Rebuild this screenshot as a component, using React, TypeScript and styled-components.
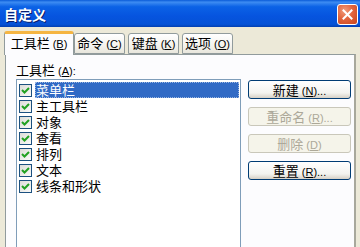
import styled, { createGlobalStyle } from "styled-components";

const GlobalStyle = createGlobalStyle`
  html, body {
    margin: 0;
    padding: 0;
    background: #ece9d8;
    overflow: hidden;
  }
  body {
    font-family: "Liberation Sans", "Noto Sans CJK SC", sans-serif;
    font-size: 12px;
    color: #000;
  }
`;

const toolbars = ["菜单栏", "主工具栏", "对象", "查看", "排列", "文本", "线条和形状"];

const Window = styled.div`
  width: 360px;
  height: 247px;
  overflow: hidden;
  display: flex;
  flex-direction: column;
  background: #ece9d8;
`;

const TitleBar = styled.div`
  height: 27px;
  flex: none;
  display: flex;
  align-items: center;
  justify-content: space-between;
  padding: 0 2px 0 4px;
  background: linear-gradient(
    to bottom,
    #0a5bd8 0%,
    #3d8cf2 8%,
    #0b62e6 25%,
    #0654df 60%,
    #0552d6 90%,
    #033fb0 100%
  );
`;

const Title = styled.span`
  color: #fff;
  font-family: "Noto Sans CJK SC", sans-serif;
  font-weight: 700;
  font-size: 14px;
  text-shadow: 1px 1px 0 #0a1e6b;
`;

const CloseButton = styled.div`
  width: 19px;
  height: 19px;
  margin-top: 1px;
  border: 1px solid #fff;
  border-radius: 3px;
  background: radial-gradient(circle at 35% 30%, #f09c7c 0%, #e2653e 45%, #c7431c 100%);
  display: flex;
  align-items: center;
  justify-content: center;
`;

const Body = styled.div`
  flex: 1;
  padding: 3px 0 0 4px;
  display: flex;
  flex-direction: column;
  min-height: 0;
`;

const TabRow = styled.div`
  display: flex;
  align-items: flex-end;
  height: 24px;
  flex: none;
  position: relative;
  z-index: 1;
`;

const Tab = styled.div<{ $active?: boolean; $w: number }>`
  width: ${(p) => p.$w}px;
  height: ${(p) => (p.$active ? 24 : 21)}px;
  margin-right: ${(p) => (p.$active ? 0 : 3)}px;
  box-sizing: border-box;
  border: 1px solid #919b9c;
  border-bottom: ${(p) => (p.$active ? "none" : "1px solid #919b9c")};
  border-radius: 3px 3px 0 0;
  background: ${(p) =>
    p.$active ? "#fcfcfe" : "linear-gradient(to bottom, #ffffff, #f4f3ee 60%, #e8e6dc)"};
  border-top: ${(p) => (p.$active ? "3px solid #f5b542" : "1px solid #919b9c")};
  font-family: "Noto Sans CJK SC", sans-serif;
  font-size: 13px;
  line-height: 18px;
  text-align: center;
  white-space: nowrap;
  margin-bottom: ${(p) => (p.$active ? -1 : 0)}px;
`;

const Panel = styled.div`
  margin-left: 1px;
  width: 351px;
  flex: 1;
  min-height: 0;
  box-sizing: border-box;
  border: 1px solid #919b9c;
  border-bottom: none;
  border-right: 2px solid #a8a89c;
  background: #fcfcfe;
  display: grid;
  grid-template-columns: 225px 103px;
  column-gap: 7px;
  padding: 8px 0 0 10px;
`;

const ListColumn = styled.div`
  display: flex;
  flex-direction: column;
  min-height: 0;
`;

const FieldLabel = styled.div`
  font-family: "Noto Sans CJK SC", sans-serif;
  font-size: 13px;
  line-height: 14px;
  height: 14px;
  margin-bottom: 2px;
`;

const ListBox = styled.div`
  flex: 1;
  min-height: 0;
  box-sizing: border-box;
  border: 1px solid #7f9db9;
  border-bottom: none;
  background: #fff;
  padding: 2px 0 0 2px;
`;

const Row = styled.div`
  display: flex;
  align-items: center;
  height: 16px;
`;

const Check = styled.div`
  width: 11px;
  height: 11px;
  flex: none;
  border: 1px solid #1c5180;
  background: linear-gradient(135deg, #dcdcd7, #fafaf8);
  display: flex;
  align-items: center;
  justify-content: center;
  margin-right: 3px;
`;

const ItemText = styled.div<{ $selected?: boolean }>`
  flex: 1;
  height: 16px;
  line-height: 16px;
  padding-left: 1px;
  font-family: "Noto Sans CJK SC", sans-serif;
  font-size: 13px;
  background: ${(p) => (p.$selected ? "#316ac5" : "transparent")};
  color: ${(p) => (p.$selected ? "#fff" : "#000")};
  outline: ${(p) => (p.$selected ? "1px dotted #9ab5e0" : "none")};
  outline-offset: -1px;
  margin-right: 1px;
`;

const ButtonColumn = styled.div`
  display: flex;
  flex-direction: column;
  gap: 8px;
  padding-top: 17px;
`;

const Button = styled.div<{ $disabled?: boolean }>`
  height: 19px;
  box-sizing: border-box;
  border: 1px solid ${(p) => (p.$disabled ? "#c9c7ba" : "#003c74")};
  border-radius: 3px;
  background: ${(p) =>
    p.$disabled ? "#f5f4ea" : "linear-gradient(to bottom, #ffffff, #f3f3ef 70%, #d6d0c5)"};
  color: ${(p) => (p.$disabled ? "#aca899" : "#000")};
  font-family: "Noto Sans CJK SC", sans-serif;
  font-size: 13px;
  line-height: 17px;
  text-align: center;
  white-space: nowrap;
`;

const Key = styled.span`
  text-decoration: underline;
`;

const Paren = styled.span`
  font-family: "Liberation Sans", sans-serif;
  font-size: 11px;
  margin-left: 3px;
`;

function Accel({ k, tail = "" }: { k: string; tail?: string }) {
  return (
    <Paren>
      (<Key>{k}</Key>){tail}
    </Paren>
  );
}

export default function App() {
  return (
    <Window>
      <GlobalStyle />
      <TitleBar>
        <Title>自定义</Title>
        <CloseButton>
          <svg width="11" height="11" viewBox="0 0 11 11">
            <path d="M1.5 1.5 L9.5 9.5 M9.5 1.5 L1.5 9.5" stroke="#fff" strokeWidth="2" strokeLinecap="square" />
          </svg>
        </CloseButton>
      </TitleBar>
      <Body>
        <TabRow>
          <Tab $active $w={70}>
            工具栏<Accel k="B" />
          </Tab>
          <Tab $w={51}>
            命令<Accel k="C" />
          </Tab>
          <Tab $w={51}>
            键盘<Accel k="K" />
          </Tab>
          <Tab $w={51}>
            选项<Accel k="O" />
          </Tab>
        </TabRow>
        <Panel>
          <ListColumn>
            <FieldLabel>
              工具栏<Accel k="A" tail=":" />
            </FieldLabel>
            <ListBox>
              {toolbars.map((name, i) => (
                <Row key={name}>
                  <Check>
                    <svg width="9" height="9" viewBox="0 0 9 9">
                      <path d="M1 4 L3.5 6.5 L8 2" fill="none" stroke="#21a121" strokeWidth="2" />
                    </svg>
                  </Check>
                  <ItemText $selected={i === 0}>{name}</ItemText>
                </Row>
              ))}
            </ListBox>
          </ListColumn>
          <ButtonColumn>
            <Button>
              新建<Accel k="N" tail="..." />
            </Button>
            <Button $disabled>
              重命名<Accel k="R" tail="..." />
            </Button>
            <Button $disabled>
              删除<Accel k="D" />
            </Button>
            <Button>
              重置<Accel k="R" tail="..." />
            </Button>
          </ButtonColumn>
        </Panel>
      </Body>
    </Window>
  );
}
